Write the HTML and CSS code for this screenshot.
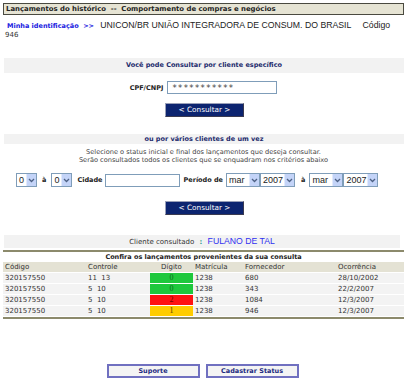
FILE: index.html
```html
<!DOCTYPE html>
<html lang="pt-BR">
<head>
  <meta charset="UTF-8">
  <title>Lançamentos do histórico</title>
  <link rel="stylesheet" href="styles.css">
</head>
<body>
  <div class="titlebar">Lançamentos do histórico &nbsp;--&nbsp; Comportamento de compras e negócios</div>

  <div class="ident">
    <span class="ident-label">Minha identificação &nbsp;&gt;&gt;</span>
    <span class="ident-name">UNICON/BR UNIÃO INTEGRADORA DE CONSUM. DO BRASIL</span>
    <span class="ident-code">Código</span>
  </div>
  <div class="ident-num">946</div>

  <div class="band band-one">Você pode Consultar por cliente específico</div>

  <div class="cpf-row">
    <label class="lbl" for="cpf">CPF/CNPJ</label>
    <input class="field cpf-field" id="cpf" type="text" value="***********">
  </div>
  <div class="btn-row"><button class="btn-consult">&lt; Consultar &gt;</button></div>

  <div class="band band-two">ou por vários clientes de um vez</div>
  <p class="hint">Selecione o status inicial e final dos lançamentos que deseja consultar.<br>Serão consultados todos os clientes que se enquadram nos critérios abaixo</p>

  <div class="filters">
    <div class="sel sel-s"><span>0</span><i class="arrow"><svg width="7" height="5" viewBox="0 0 7 5"><path d="M1 1 L3.5 3.5 L6 1" fill="none" stroke="#4d6185" stroke-width="1.3"/></svg></i></div>
    <span class="lbl sep">à</span>
    <div class="sel sel-s"><span>0</span><i class="arrow"><svg width="7" height="5" viewBox="0 0 7 5"><path d="M1 1 L3.5 3.5 L6 1" fill="none" stroke="#4d6185" stroke-width="1.3"/></svg></i></div>
    <span class="lbl cidade">Cidade</span>
    <input class="field city-field" type="text">
    <span class="lbl periodo">Período de</span>
    <div class="sel sel-m"><span>mar</span><i class="arrow"><svg width="7" height="5" viewBox="0 0 7 5"><path d="M1 1 L3.5 3.5 L6 1" fill="none" stroke="#4d6185" stroke-width="1.3"/></svg></i></div>
    <div class="sel sel-y"><span>2007</span><i class="arrow"><svg width="7" height="5" viewBox="0 0 7 5"><path d="M1 1 L3.5 3.5 L6 1" fill="none" stroke="#4d6185" stroke-width="1.3"/></svg></i></div>
    <span class="lbl sep2">à</span>
    <div class="sel sel-m"><span>mar</span><i class="arrow"><svg width="7" height="5" viewBox="0 0 7 5"><path d="M1 1 L3.5 3.5 L6 1" fill="none" stroke="#4d6185" stroke-width="1.3"/></svg></i></div>
    <div class="sel sel-y"><span>2007</span><i class="arrow"><svg width="7" height="5" viewBox="0 0 7 5"><path d="M1 1 L3.5 3.5 L6 1" fill="none" stroke="#4d6185" stroke-width="1.3"/></svg></i></div>
  </div>
  <div class="btn-row btn-row-two"><button class="btn-consult">&lt; Consultar &gt;</button></div>

  <div class="band band-client">Cliente consultado <span class="colon">:</span> <span class="client-name">FULANO DE TAL</span></div>

  <div class="results">
    <div class="results-title">Confira os lançamentos provenientes da sua consulta</div>
    <table class="grid">
      <colgroup>
        <col style="width:83px"><col style="width:64px"><col style="width:43px">
        <col style="width:50px"><col style="width:93px"><col style="width:68px">
      </colgroup>
      <tr class="head">
        <td>Código</td><td>Controle</td><td class="center">Dígito</td><td>Matrícula</td><td>Fornecedor</td><td>Ocorrência</td>
      </tr>
      <tr>
        <td>320157550</td><td>11&nbsp; 13</td><td class="dig green">0</td><td>1238</td><td>680</td><td>28/10/2002</td>
      </tr>
      <tr>
        <td>320157550</td><td>5&nbsp; 10</td><td class="dig green">0</td><td>1238</td><td>343</td><td>22/2/2007</td>
      </tr>
      <tr>
        <td>320157550</td><td>5&nbsp; 10</td><td class="dig red">2</td><td>1238</td><td>1084</td><td>12/3/2007</td>
      </tr>
      <tr>
        <td>320157550</td><td>5&nbsp; 10</td><td class="dig yellow">1</td><td>1238</td><td>946</td><td>12/3/2007</td>
      </tr>
    </table>
  </div>

  <div class="footer">
    <button class="btn-foot">Suporte</button>
    <button class="btn-foot">Cadastrar Status</button>
  </div>
</body>
</html>
```

FILE: styles.css
```css
body {
  margin: 0;
  padding: 3px 5px 0 3px;
  background: #fff;
  font-family: "DejaVu Sans", Verdana, sans-serif;
  font-size: 7px;
  color: #333;
}
.titlebar {
  height: 10px;
  line-height: 10px;
  border: 1px solid #4a4a40;
  background: #e6e4d4;
  padding-left: 2px;
  font-weight: bold;
  font-size: 6.9px;
  color: #222;
}
.ident {
  margin-top: 5px;
  height: 11px;
  line-height: 11px;
  padding-left: 4px;
  white-space: nowrap;
}
.ident-label {
  color: #2020e0;
  font-weight: bold;
  font-size: 6.5px;
}
.ident-name, .ident-code {
  font-family: "Liberation Sans", Arial, sans-serif;
  font-size: 8.7px;
  color: #222;
  margin-left: 4px;
}
.ident-code {
  margin-left: 9px;
}
.ident-num {
  padding-left: 2px;
  height: 9px;
  line-height: 9px;
  color: #333;
}
.band {
  background: #f2f2f2;
  text-align: center;
  font-weight: bold;
  font-size: 6.5px;
  color: #1c2a6c;
  margin-left: 1px;
  margin-right: 0;
}
.band-one {
  margin-top: 18px;
  height: 15px;
  line-height: 15px;
}
.band-two {
  margin-top: 17px;
  height: 10px;
  line-height: 10px;
}
.band-client {
  margin-top: 20px;
  margin-right: 4px;
  height: 13px;
  line-height: 13px;
  font-weight: normal;
  font-size: 7px;
  color: #333;
}
.colon {
  color: #2a9a8a;
  font-weight: bold;
  margin: 0 3px;
}
.client-name {
  font-family: "Liberation Sans", Arial, sans-serif;
  font-size: 8.7px;
  color: #3030f0;
}
.lbl {
  font-weight: bold;
  font-size: 6.5px;
  color: #222;
}
.field {
  box-sizing: border-box;
  border: 1px solid #7f9db9;
  background: #fff;
  padding: 0 3px;
  margin: 0;
  outline: none;
}
.cpf-row {
  margin-top: 8px;
  display: flex;
  align-items: center;
  justify-content: center;
  gap: 4px;
  height: 13px;
  padding-right: 0;
}
.cpf-field {
  width: 110px;
  height: 13px;
  font-family: "DejaVu Sans", Verdana, sans-serif;
  font-size: 8.5px;
  color: #444;
  letter-spacing: 1.4px;
  padding-left: 4px;
}
.btn-row {
  margin-top: 9px;
  text-align: center;
  height: 14px;
}
.btn-row-two {
  margin-top: 14px;
}
.btn-consult {
  width: 79px;
  height: 14px;
  padding: 0;
  background: #0c2470;
  color: #fff;
  border: 1px solid;
  border-color: #9aa0b8 #3a3a50 #3a3a50 #9aa0b8;
  font-family: "DejaVu Sans", Verdana, sans-serif;
  font-size: 7.3px;
  line-height: 12px;
  margin-left: 2px;
}
.hint {
  margin: 4px 0 0;
  text-align: center;
  line-height: 8px;
  font-size: 6.6px;
  color: #444;
}
.filters {
  margin-top: 9px;
  display: flex;
  align-items: center;
  height: 14px;
  padding-left: 13px;
}
.sel {
  box-sizing: border-box;
  height: 14px;
  border: 1px solid #7f9db9;
  background: #fff;
  display: flex;
  align-items: stretch;
  font-family: "Liberation Sans", Arial, sans-serif;
  font-size: 9px;
  color: #222;
}
.sel span {
  flex: 1;
  padding-left: 2px;
  line-height: 12px;
}
.arrow {
  width: 9px;
  background: #c4d4f8;
  border-left: 1px solid #e2eafc;
  display: flex;
  align-items: center;
  justify-content: center;
}
.sel-s { width: 21px; }
.sel-m { width: 34px; }
.sel-y { width: 35px; }
.sep { margin: 0 5px 0 5px; }
.cidade { margin: 0 2px 0 5px; }
.city-field {
  width: 75px;
  height: 13px;
}
.periodo { margin: 0 3px 0 4px; }
.sep2 { margin: 0 4px 0 6px; }
.results {
  margin-top: 2px;
  border-top: 2px solid #8c8a6c;
  border-bottom: 2px solid #8c8a6c;
}
.results-title {
  text-align: center;
  font-weight: bold;
  font-size: 6.5px;
  color: #222;
  height: 10px;
  line-height: 10px;
}
.grid {
  width: 401px;
  table-layout: fixed;
  border-collapse: separate;
  border-spacing: 0 1px;
  margin-top: -1px;
  font-size: 7px;
  color: #333;
}
.grid td {
  height: 10px;
  padding: 0 0 0 2px;
  line-height: 10px;
  background: #f3f3f3;
  white-space: nowrap;
}
.grid .head td {
  background: #e4e2d4;
  color: #333;
}
.grid td.center {
  text-align: center;
  padding: 0;
}
.grid td.dig {
  text-align: center;
  padding: 0;
  font-family: "Liberation Serif", "Times New Roman", serif;
  font-size: 8px;
}
.green {
  background: #1ec83c !important;
  color: #0a6a20;
}
.red {
  background: #ff1212 !important;
  color: #7a0000;
}
.yellow {
  background: #ffcc00 !important;
  color: #5a4000;
}
.footer {
  margin-top: 45px;
  display: flex;
  justify-content: center;
  gap: 6px;
  padding-right: 2px;
}
.btn-foot {
  width: 93px;
  height: 14px;
  padding: 0;
  background: #f4f4f4;
  border: 2px solid #7070c0;
  color: #1c2a80;
  font-family: "DejaVu Sans", Verdana, sans-serif;
  font-weight: bold;
  font-size: 6.5px;
}
```
